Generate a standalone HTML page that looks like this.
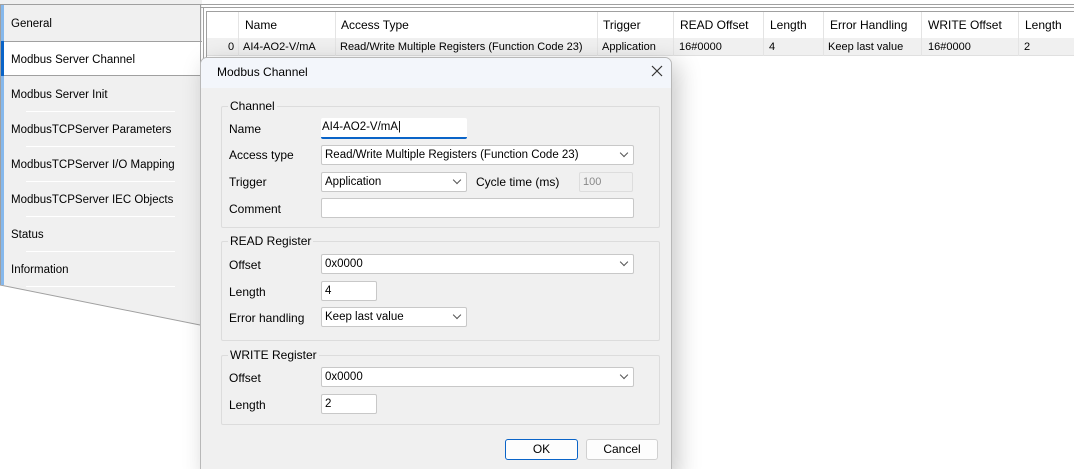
<!DOCTYPE html>
<html><head><style>
*{box-sizing:border-box;margin:0;padding:0}
html{width:1074px;height:469px;overflow:hidden}
body{width:1074px;height:469px;overflow:hidden;background:#fff;font-family:"Liberation Sans",sans-serif;font-size:12px;color:#000;position:relative}
.a{position:absolute}
.tab{position:absolute;left:4px;width:198px;height:35px;padding:2px 0 0 7px;line-height:35px;font-size:11.5px}
.sep{position:absolute;left:26px;width:149px;height:1px;background:#fff}
.th,.td{position:absolute;white-space:nowrap;font-size:12px}
.vl{position:absolute;width:1px;background:#e4e4e4}
.lbl{position:absolute;left:229px;font-size:12px}
.inp{position:absolute;background:#fff;border:1px solid #c8c8c8;border-radius:2px;padding-left:3px;line-height:19px;font-size:11.5px}
.sel:after{content:"";position:absolute;right:6px;top:4px;width:5px;height:5px;border-right:1px solid #555;border-bottom:1px solid #555;transform:rotate(45deg)}
.grp{position:absolute;left:221px;width:439px;border:1px solid #dcdcdc;border-radius:2px}
.gt{position:absolute;left:6px;top:-8px;background:#f0f0f0;padding:0 2px;font-size:12px}
.btn{position:absolute;top:439px;height:21px;background:#fdfdfd;border:1px solid #d0d0d0;border-radius:3px;text-align:center;line-height:19px;font-size:12px}
</style></head><body>
<svg class="a" style="left:0;top:0" width="205" height="340"><polygon points="0,0 202,0 202,325 0,285" fill="#f0f0f0"/><polyline points="0,285 200,325" stroke="#a0a0a0" fill="none"/><line x1="0" y1="4.5" x2="202" y2="4.5" stroke="#a0a0a0"/><line x1="0.5" y1="4" x2="0.5" y2="285" stroke="#a0a0a0"/></svg>
<div class="a" style="left:1px;top:5px;width:3px;height:280px;background:#86b8ec"></div>
<div class="tab" style="top:5px">General</div>
<div class="a" style="left:1px;top:41px;width:201px;height:35px;background:#fff;border-top:1px solid #a0a0a0;border-bottom:1px solid #a0a0a0"></div>
<div class="a" style="left:1px;top:41px;width:3px;height:35px;background:#0a64c8"></div>
<div class="tab" style="top:41px">Modbus Server Channel</div>
<div class="tab" style="top:76px">Modbus Server Init</div>
<div class="sep" style="top:111px"></div>
<div class="tab" style="top:111px">ModbusTCPServer Parameters</div>
<div class="sep" style="top:146px"></div>
<div class="tab" style="top:146px">ModbusTCPServer I/O Mapping</div>
<div class="sep" style="top:181px"></div>
<div class="tab" style="top:181px">ModbusTCPServer IEC Objects</div>
<div class="sep" style="top:216px"></div>
<div class="tab" style="top:216px">Status</div>
<div class="sep" style="top:251px"></div>
<div class="tab" style="top:251px">Information</div>
<div class="sep" style="top:286px"></div>
<div class="a" style="left:200px;top:4px;width:874px;height:1px;background:#a0a0a0"></div>
<div class="a" style="left:200px;top:7px;width:874px;height:1px;background:#a0a0a0"></div>
<div class="a" style="left:200px;top:4px;width:1px;height:465px;background:#a0a0a0"></div>
<div class="a" style="left:203px;top:7px;width:1px;height:462px;background:#a0a0a0"></div>
<div class="a" style="left:206px;top:11px;width:868px;height:1px;background:#a0a0a0"></div>
<div class="a" style="left:206px;top:11px;width:1px;height:458px;background:#a0a0a0"></div>
<div class="a" style="left:207px;top:38px;width:867px;height:18px;background:#f0f0f0;border-bottom:1px solid #e0e0e0"></div>
<div class="vl" style="left:238px;top:12px;height:44px"></div>
<div class="vl" style="left:335px;top:12px;height:44px"></div>
<div class="vl" style="left:597px;top:12px;height:44px"></div>
<div class="vl" style="left:673px;top:12px;height:44px"></div>
<div class="vl" style="left:763px;top:12px;height:44px"></div>
<div class="vl" style="left:823px;top:12px;height:44px"></div>
<div class="vl" style="left:921px;top:12px;height:44px"></div>
<div class="vl" style="left:1018px;top:12px;height:44px"></div>
<div class="th" style="left:245px;top:18px">Name</div>
<div class="th" style="left:341px;top:18px">Access Type</div>
<div class="th" style="left:603px;top:18px">Trigger</div>
<div class="th" style="left:680px;top:18px">READ Offset</div>
<div class="th" style="left:770px;top:18px">Length</div>
<div class="th" style="left:830px;top:18px">Error Handling</div>
<div class="th" style="left:928px;top:18px">WRITE Offset</div>
<div class="th" style="left:1025px;top:18px">Length</div>
<div class="td" style="left:228px;top:41px;font-size:11px">0</div>
<div class="td" style="left:243px;top:41px;font-size:11px">AI4-AO2-V/mA</div>
<div class="td" style="left:340px;top:41px;font-size:11px">Read/Write Multiple Registers (Function Code 23)</div>
<div class="td" style="left:602px;top:41px;font-size:11px">Application</div>
<div class="td" style="left:679px;top:41px;font-size:11px">16#0000</div>
<div class="td" style="left:769px;top:41px;font-size:11px">4</div>
<div class="td" style="left:828px;top:41px;font-size:11px">Keep last value</div>
<div class="td" style="left:928px;top:41px;font-size:11px">16#0000</div>
<div class="td" style="left:1024px;top:41px;font-size:11px">2</div>
<div class="a" style="left:200px;top:57px;width:472px;height:420px;background:#f0f0f0;border:1px solid #b8b8b8;border-radius:7px;box-shadow:6px 6px 24px rgba(0,0,0,0.22);overflow:hidden">
<div style="height:30px;background:#f3f6fb;line-height:29px;padding-left:16px;font-size:12px">Modbus Channel</div>
</div>
<svg class="a" style="left:651px;top:65px" width="12" height="12"><path d="M1 1L11 11M11 1L1 11" stroke="#333" stroke-width="1.2"/></svg>
<div class="grp" style="top:106px;height:122px"><span class="gt">Channel</span></div>
<div class="lbl" style="top:122px">Name</div>
<div class="inp" style="left:321px;top:118px;width:146px;height:21px;border:none;border-bottom:2px solid #0a64c8;padding-left:1px">AI4-AO2-V/mA|</div>
<div class="lbl" style="top:148px">Access type</div>
<div class="inp sel" style="left:321px;top:145px;width:313px;height:20px">Read/Write Multiple Registers (Function Code 23)</div>
<div class="lbl" style="top:175px">Trigger</div>
<div class="inp sel" style="left:321px;top:172px;width:146px;height:20px">Application</div>
<div class="a" style="left:476px;top:175px">Cycle time (ms)</div>
<div class="inp" style="left:579px;top:172px;width:54px;height:20px;background:#f0f0f0;border-color:#ddd;color:#888;font-size:11px">100</div>
<div class="lbl" style="top:202px">Comment</div>
<div class="inp" style="left:321px;top:198px;width:313px;height:20px"></div>
<div class="grp" style="top:241px;height:100px"><span class="gt">READ Register</span></div>
<div class="lbl" style="top:258px">Offset</div>
<div class="inp sel" style="left:321px;top:254px;width:313px;height:20px">0x0000</div>
<div class="lbl" style="top:285px">Length</div>
<div class="inp" style="left:321px;top:281px;width:56px;height:20px">4</div>
<div class="lbl" style="top:311px">Error handling</div>
<div class="inp sel" style="left:321px;top:307px;width:146px;height:20px">Keep last value</div>
<div class="grp" style="top:355px;height:70px"><span class="gt">WRITE Register</span></div>
<div class="lbl" style="top:371px">Offset</div>
<div class="inp sel" style="left:321px;top:367px;width:313px;height:20px">0x0000</div>
<div class="lbl" style="top:398px">Length</div>
<div class="inp" style="left:321px;top:394px;width:56px;height:20px">2</div>
<div class="btn" style="left:505px;width:73px;border-color:#0a64c8">OK</div>
<div class="btn" style="left:586px;width:72px">Cancel</div>
</body></html>
